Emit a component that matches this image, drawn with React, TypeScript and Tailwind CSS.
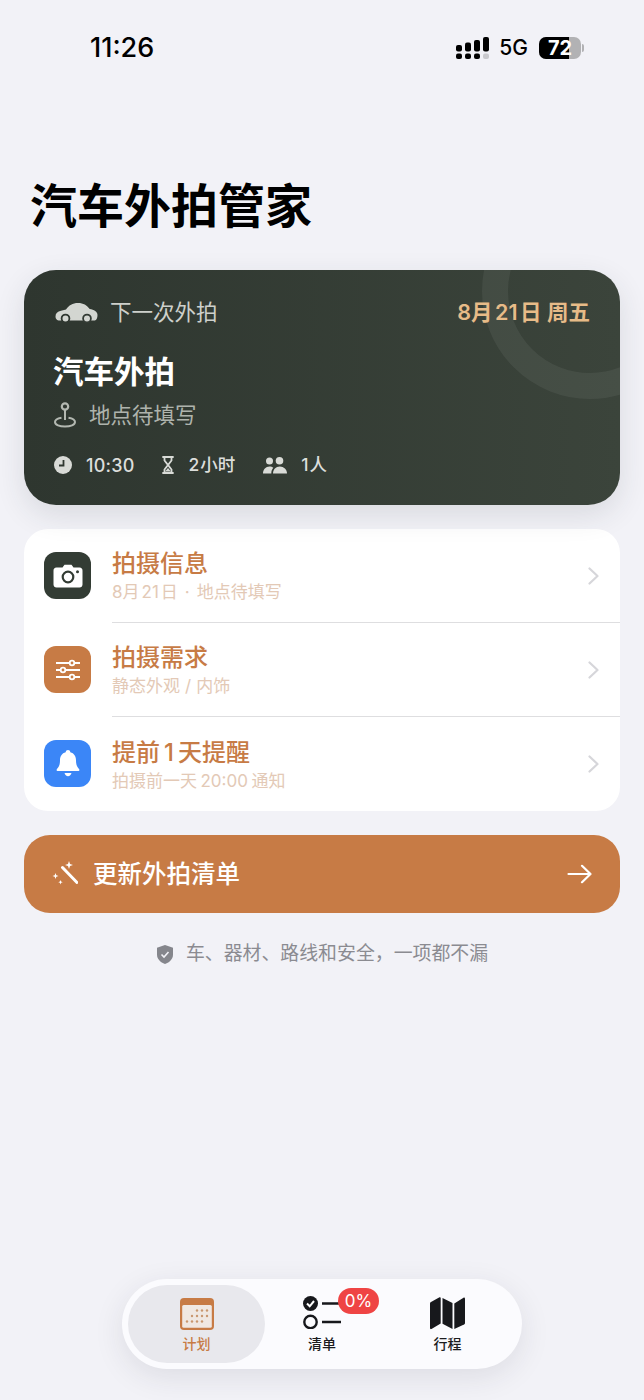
import React from "react";

const cjk = "font-['Inter','Noto_Sans_CJK_SC',sans-serif]";

const CarIcon = () => (
  <svg width="43" height="21" viewBox="0 0 43 21">
    <path d="M.5 14.500c0-3.300 2-5 5.500-5.800l5-1.200C14 3.300 17.500 1 23 1c5.500 0 8.800 2.300 11.700 6 4.300.8 7.800 2.400 7.800 6 0 2.600-.7 4.600-2.500 5.500H3.500C1.500 18 .5 16.500.5 14.500z" fill="#d3d6d1" />
    <circle cx="10.500" cy="16.500" r="3.900" fill="#d3d6d1" stroke="#2f3730" strokeWidth="1.800" />
    <circle cx="32" cy="16.500" r="3.900" fill="#d3d6d1" stroke="#333b34" strokeWidth="1.800" />
  </svg>
);

const PinIcon = () => (
  <svg width="22" height="26" viewBox="0 0 22 26" fill="none" stroke="#b3b8b1" strokeWidth="2">
    <circle cx="11" cy="4.500" r="3.200" strokeWidth="2.200" />
    <path d="M11 7.500v10.500" />
    <path d="M7.500 15.700C3.500 16.400 1 17.700 1 20c0 2.800 4.500 4.500 10 4.500S21 22.800 21 20c0-2.300-2.500-3.600-6.500-4.300" />
  </svg>
);

const ClockIcon = () => (
  <svg width="18" height="18" viewBox="0 0 18 18">
    <circle cx="9" cy="9" r="9" fill="#d9dbd7" />
    <path d="M9.500 4v5.500H5" fill="none" stroke="#2f3730" strokeWidth="1.800" />
  </svg>
);

const HourglassIcon = () => (
  <svg width="12" height="18" viewBox="0 0 12 18" fill="none" stroke="#d9dbd7" strokeWidth="1.800">
    <path d="M1 1h10M1 17h10" strokeLinecap="round" />
    <path d="M2.500 1v3.500L6 9l3.500-4.500V1M2.500 17v-3.500L6 9l3.500 4.500V17" />
    <path d="M3 15.500 6 12l3 3.500z" fill="#d9dbd7" stroke="none" />
  </svg>
);

const PeopleIcon = () => (
  <svg width="24" height="17" viewBox="0 0 24 17" fill="#d9dbd7">
    <circle cx="6.500" cy="4" r="3.500" />
    <circle cx="16.500" cy="3.800" r="3.800" />
    <path d="M0 16.500c0-4 2.800-7 6.500-7 1.500 0 2.800.5 3.800 1.300-1.300 1.500-2 3.500-2 5.700z" />
    <path d="M10 16.500c0-4 2.800-7 6.800-7s7.200 3 7.200 7z" />
  </svg>
);

const CameraIcon = () => (
  <svg width="30" height="24" viewBox="0 0 30 24">
    <path d="M3.500 3.500h6L11.500.8h7l2 2.700h6A3.200 3.200 0 0 1 29.500 6.700v13.800a3.200 3.200 0 0 1-3 3h-23a3.200 3.200 0 0 1-3-3V6.700a3.200 3.200 0 0 1 3-3.200z" fill="#fff" />
    <circle cx="15" cy="13" r="5.300" fill="none" stroke="#333c34" strokeWidth="2.200" />
    <circle cx="24.500" cy="7.700" r="1.500" fill="#333c34" />
  </svg>
);

const SlidersIcon = () => (
  <svg width="26" height="24" viewBox="0 0 26 24" fill="#c77b45" stroke="#fff" strokeWidth="1.800">
    <path d="M1 5h24M1 12h24M1 19h24" />
    <circle cx="17" cy="5" r="2.300" />
    <circle cx="8" cy="12" r="2.300" />
    <circle cx="17" cy="19" r="2.300" />
  </svg>
);

const BellIcon = () => (
  <svg width="24" height="27" viewBox="0 0 24 27" fill="#fff">
    <path d="M12 0c1.300 0 2.200.9 2.300 2.200 3.800 1 5.700 4 5.700 8 0 4.500 1 6.500 3 8.700.8.900.4 2.100-.9 2.100H1.900C.6 21 .2 19.800 1 18.900c2-2.200 3-4.200 3-8.700 0-4 1.900-7 5.700-8C9.800.9 10.700 0 12 0z" />
    <path d="M8.500 23h7c-.5 2-1.800 3.200-3.500 3.200S9 25 8.500 23z" />
  </svg>
);

const WandIcon = () => (
  <svg width="26" height="26" viewBox="0 0 26 26" fill="#fff">
    <path d="M10.500 6.500 25 21.500" stroke="#fff" strokeWidth="3" fill="none" strokeLinecap="round" />
    <path d="M17 0l1 3 3 1-3 1-1 3-1-3-3-1 3-1zM3.500 12l.8 2.200 2.200.8-2.200.8-.8 2.200-.8-2.200L.5 15l2.200-.8zM8.500 19l.6 1.600 1.600.6-1.600.6-.6 1.600-.6-1.600-1.600-.6 1.600-.6z" />
  </svg>
);

const ShieldIcon = () => (
  <svg width="16" height="19" viewBox="0 0 16 19">
    <path d="M8 0l8 2.800v6.700c0 4.500-3.300 7.800-8 9.500-4.700-1.700-8-5-8-9.500V2.800z" fill="#85868c" />
    <path d="M4.500 9.500 7 12l4.500-5" fill="none" stroke="#f2f2f7" strokeWidth="1.600" />
  </svg>
);

const ArrowIcon = () => (
  <svg width="25" height="20" viewBox="0 0 25 20" fill="none" stroke="#fff" strokeWidth="2.200" strokeLinecap="round" strokeLinejoin="round">
    <path d="M1.500 10h22M15 1.800 23.500 10 15 18.200" />
  </svg>
);

const ChevronIcon = () => (
  <svg width="11" height="18" viewBox="0 0 11 18" fill="none" stroke="#d6d6da" strokeWidth="2.200" strokeLinecap="round" strokeLinejoin="round">
    <path d="M1.500 1.500 9.500 9l-8 7.500" />
  </svg>
);

const CalendarIcon = () => (
  <svg width="34" height="32" viewBox="0 0 34 32">
    <rect x="0" y="0" width="34" height="32" rx="4" fill="#c77b45" />
    <rect x="2.200" y="7" width="29.600" height="22.800" rx="1.500" fill="#f0e8e2" />
    <g fill="#c9976f">
      {[17, 22, 27].map((x) => <circle key={x} cx={x} cy="12.500" r="1.200" />)}
      {[12, 17, 22, 27].map((x) => <circle key={x} cx={x} cy="18" r="1.200" />)}
      {[7, 12, 17, 22].map((x) => <circle key={x} cx={x} cy="23.500" r="1.200" />)}
    </g>
  </svg>
);

const ListIcon = () => (
  <svg width="38" height="33" viewBox="0 0 38 33">
    <circle cx="7.500" cy="7.500" r="7.500" fill="#17181c" />
    <path d="M4 7.500 6.700 10.300 11 5" fill="none" stroke="#fff" strokeWidth="2" />
    <circle cx="7.500" cy="26" r="6.200" fill="none" stroke="#17181c" strokeWidth="2.400" />
    <path d="M19 7.500h19M19 26h19" stroke="#17181c" strokeWidth="2.600" />
  </svg>
);

const MapIcon = () => (
  <svg width="35" height="33" viewBox="0 0 35 33" fill="#17181c">
    <path d="M0 6.500c0-.8.400-1.300 1-1.600L9.500.3c.7-.3 1.200 0 1.200.8V26.500L1.500 32c-.8.400-1.500 0-1.500-.9z" />
    <path d="M12.500 1l10 5v26l-10-5.300z" />
    <path d="M24.300 6.500 33.500.7c.8-.4 1.500 0 1.500.9v24.300c0 .8-.4 1.300-1 1.600l-9.700 4.500z" />
  </svg>
);

const rows = [
  {
    title: <>拍摄信息</>,
    sub: <>8月<span className="mx-[2px]">21</span>日<span className="mx-[7px]">·</span>地点待填写</>,
    bg: "bg-[#333c34]",
    icon: <CameraIcon />,
  },
  {
    title: <>拍摄需求</>,
    sub: <>静态外观<span className="mx-[5px]">/</span>内饰</>,
    bg: "bg-[#c77b45]",
    icon: <SlidersIcon />,
  },
  {
    title: <>提前<span className="mx-[4px]">1</span>天提醒</>,
    sub: <>拍摄前一天<span className="mx-[3.500px]">20:00</span>通知</>,
    bg: "bg-[#3b86f7]",
    icon: <BellIcon />,
  },
];

export default function App() {
  return (
    <div className={`${cjk} flex h-[1400px] w-[644px] flex-col overflow-hidden bg-[#f2f2f7] text-black`}>
      {/* status bar */}
      <div className="flex h-[96px] items-center justify-between pb-[1px] pl-[90px] pr-[60px]">
        <span className="text-[27px] leading-none font-medium">11:26</span>
        <div className="flex items-center">
          <svg width="33" height="22" viewBox="0 0 33 22" fill="#000">
            <rect x="0" y="8" width="6" height="6.500" rx="2" />
            <rect x="0" y="16.500" width="6" height="5.500" rx="2" />
            <rect x="9" y="5.500" width="6" height="9" rx="2" />
            <rect x="9" y="16.500" width="6" height="5.500" rx="2" />
            <rect x="18" y="3" width="6" height="11.500" rx="2" />
            <rect x="18" y="16.500" width="6" height="5.500" rx="2" />
            <rect x="27" y="0" width="6" height="14.500" rx="2" />
            <rect x="27" y="16.500" width="6" height="5.500" rx="2" fill="#c9c9cd" />
          </svg>
          <span className="ml-[10px] text-[21px] leading-none font-medium">5G</span>
          <div className="relative ml-[11px] flex h-[22px] w-[42px] items-center overflow-hidden rounded-[7px] bg-[#b2b2b4]">
            <div className="h-full w-[30px] bg-black" />
            <span className="absolute inset-0 text-center text-[20px] leading-[22px] font-bold text-white">72</span>
          </div>
          <div className="ml-[1px] h-[8px] w-[2px] rounded-r-full bg-[#b2b2b4]" />
        </div>
      </div>

      <h1 className="mt-[81px] pl-[30px] text-[47px] leading-[58px] font-bold">汽车外拍管家</h1>

      {/* next shoot card */}
      <div className="relative mx-[24px] mt-[35px] h-[235px] overflow-hidden rounded-[32px] bg-gradient-to-r from-[#2e362f] to-[#3b443b] shadow-[0_10px_30px_rgba(40,50,60,0.12)]">
        <div className="absolute -right-[78px] -top-[87px] h-[216px] w-[216px] rounded-full border-[26px] border-white/[0.06]" />
        <div className="relative flex h-[85px] items-center justify-between pl-[31px] pr-[30px]">
          <div className="flex items-center">
            <CarIcon />
            <span className="ml-[12px] text-[21.500px] text-[#cdd0cb]">下一次外拍</span>
          </div>
          <span className="text-[21.500px] font-semibold text-[#e7bb88]">8月<span className="mx-[2.500px]">21</span>日 周五</span>
        </div>
        <div className="relative -mt-[1px] pl-[29px] text-[30.500px] leading-[36px] font-semibold text-white">汽车外拍</div>
        <div className="relative mt-[10px] flex h-[30px] items-center pl-[30px]">
          <PinIcon />
          <span className="ml-[13px] text-[21.500px] text-[#aeb3ac]">地点待填写</span>
        </div>
        <div className="relative mt-[22px] flex h-[26px] items-center pl-[30px] text-[18px] font-medium text-[#dcdedb]">
          <ClockIcon />
          <span className="ml-[14px] tracking-[0.2px]">10:30</span>
          <span className="ml-[28px] flex items-center"><HourglassIcon /></span>
          <span className="ml-[14px] text-[17.500px]">2<span className="ml-[1px]">小时</span></span>
          <span className="ml-[28px] flex items-center"><PeopleIcon /></span>
          <span className="ml-[14px] text-[17.500px]">1<span className="ml-[1px]">人</span></span>
        </div>
      </div>

      {/* settings list */}
      <div className="mx-[24px] mt-[24px] overflow-hidden rounded-[24px] bg-white">
        {rows.map((row, i) => (
          <div key={i} className="flex h-[94px] items-center pl-[20px]">
            <div className={`mb-[1px] flex h-[47px] w-[47px] shrink-0 items-center justify-center rounded-[12px] ${row.bg}`}>{row.icon}</div>
            <div className={`ml-[21px] flex h-full flex-1 items-center justify-between pr-[21px] ${i < 2 ? "border-b border-[#dedee0]" : ""}`}>
              <div className="pt-[1px]">
                <div className="text-[24px] leading-[32px] font-medium text-[#c77b45]">{row.title}</div>
                <div className="text-[17px] leading-[24px] text-[#e3c9b6]">{row.sub}</div>
              </div>
              <ChevronIcon />
            </div>
          </div>
        ))}
      </div>

      {/* main action */}
      <div className="mx-[24px] mt-[24px] flex h-[78px] items-center justify-between rounded-[26px] bg-[#c77b45] pl-[28px] pr-[28px] text-white">
        <div className="flex items-center">
          <WandIcon />
          <span className="ml-[15px] text-[24.500px] font-medium">更新外拍清单</span>
        </div>
        <ArrowIcon />
      </div>

      <div className="mt-[27px] flex items-center justify-center pl-[1px] text-[18.900px] leading-[28px] text-[#8b8b91]">
        <ShieldIcon />
        <span className="ml-[13px]">车、器材、路线和安全，一项都不漏</span>
      </div>

      {/* tab bar */}
      <div className="mx-auto mb-[31px] mt-auto flex h-[90px] w-[400px] items-center rounded-full bg-[#fbfbfe] px-[6px] shadow-[0_8px_30px_rgba(40,40,60,0.1)]">
        <div className="flex h-[78px] w-[137px] flex-col items-center rounded-full bg-[#e8e8ed] pt-[13px]">
          <CalendarIcon />
          <span className="mt-[4px] text-[14px] leading-[20px] font-medium text-[#c77b45]">计划</span>
        </div>
        <div className="relative flex h-[78px] flex-1 flex-col items-center pt-[11px]">
          <ListIcon />
          <span className="mt-[5px] text-[14px] leading-[20px] font-medium text-[#1c1c1e]">清单</span>
          <span className="absolute left-[73px] top-[3px] h-[26px] w-[41px] rounded-full bg-[#ef4444] text-center text-[17px] leading-[26px] text-white">0%</span>
        </div>
        <div className="flex h-[78px] w-[137px] flex-col items-center pt-[12px]">
          <MapIcon />
          <span className="mt-[4px] text-[14px] leading-[20px] font-medium text-[#1c1c1e]">行程</span>
        </div>
      </div>
    </div>
  );
}
